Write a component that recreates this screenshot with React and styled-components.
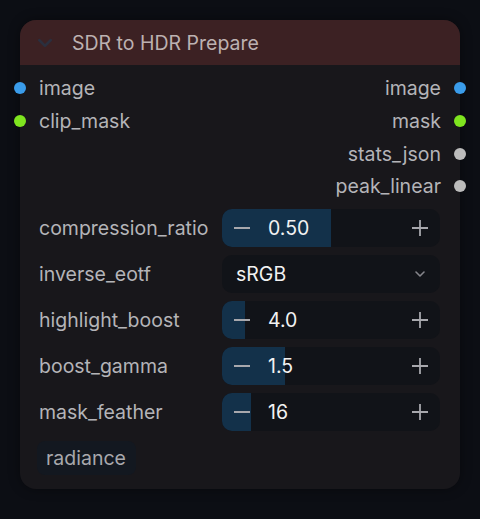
import React from "react";
import styled, { createGlobalStyle } from "styled-components";

const GlobalStyle = createGlobalStyle`
  html, body {
    margin: 0;
    padding: 0;
    background: #0c0e14;
    font-family: Inter, "Noto Sans", sans-serif;
  }
`;

const Page = styled.div`
  width: 480px;
  height: 519px;
  padding: 20px;
  box-sizing: border-box;
  background: #0c0e14;
`;

const Node = styled.div`
  width: 440px;
  height: 469px;
  box-sizing: border-box;
  background: #18171b;
  border-radius: 16px;
  display: flex;
  flex-direction: column;
  box-shadow: 0 0 12px rgba(0, 0, 0, 0.4);
`;

const Header = styled.div`
  height: 45px;
  background: #3c2123;
  border-radius: 16px 16px 0 0;
  display: flex;
  align-items: center;
  padding-left: 15px;
  gap: 17px;
  color: #bdb1b1;
  font-size: 19.5px;
`;

const Slots = styled.div`
  padding-top: 7px;
  display: flex;
  flex-direction: column;
`;

const SlotRow = styled.div`
  height: 32.7px;
  display: flex;
  align-items: center;
  justify-content: space-between;
  font-size: 19.5px;
  color: #b4b4b8;
`;

const Slot = styled.div`
  display: flex;
  align-items: center;
  gap: 13px;
  flex-direction: ${(p) => (p.$right ? "row-reverse" : "row")};
  margin: ${(p) => (p.$right ? "0 -6px 0 0" : "0 0 0 -6px")};
`;

const Dot = styled.span`
  width: 12px;
  height: 12px;
  border-radius: 50%;
  background: ${(p) => p.$color};
`;

const Widgets = styled.div`
  margin-top: 6px;
  display: flex;
  flex-direction: column;
  gap: 8px;
  padding: 0 20px 0 19px;
`;

const WidgetRow = styled.div`
  display: grid;
  grid-template-columns: 183px 218px;
  align-items: center;
  height: 38px;
`;

const Label = styled.span`
  font-size: 19.5px;
  color: #b4b4b8;
  white-space: nowrap;
`;

const Control = styled.div`
  position: relative;
  height: 38px;
  border-radius: 10px;
  background: #111318;
  overflow: hidden;
  display: flex;
  align-items: center;
  color: #f2f2f2;
  font-size: 19.5px;
  padding-left: ${(p) => (p.$select ? "14px" : "0")};
`;

const Fill = styled.div`
  position: absolute;
  left: 0;
  top: 0;
  bottom: 0;
  background: #13314a;
`;

const Btn = styled.span`
  position: relative;
  width: 40px;
  display: flex;
  justify-content: center;
  color: ${(p) => (p.$dim ? "#85858b" : "#a8a8ad")};
`;

const Value = styled.span`
  position: relative;
  flex: 1;
  padding-left: 6px;
`;

const SelectValue = styled.span`
  flex: 1;
  color: #f2f2f2;
`;

const Badge = styled.div`
  margin: 10px 0 0 17px;
  align-self: flex-start;
  height: 34px;
  padding: 0 10px 0 9px;
  display: flex;
  align-items: center;
  border-radius: 8px;
  background: #131820;
  color: #a8a8ad;
  font-size: 19.5px;
`;

const Minus = () => (
  <svg width="18" height="18" viewBox="0 0 18 18">
    <path d="M1 9h16" stroke="currentColor" strokeWidth="1.8" />
  </svg>
);

const Plus = () => (
  <svg width="18" height="18" viewBox="0 0 18 18">
    <path d="M1 9h16M9 1v16" stroke="currentColor" strokeWidth="1.8" />
  </svg>
);

const Chevron = ({ size = 14, color = "currentColor", w = 1.6 }) => (
  <svg width={size} height={size} viewBox="0 0 14 14">
    <path d="M3 5l4 4 4-4" fill="none" stroke={color} strokeWidth={w} strokeLinecap="round" strokeLinejoin="round" />
  </svg>
);

const inputs = [
  { name: "image", color: "#3a9cea" },
  { name: "clip_mask", color: "#7fe51f" },
];
const outputs = [
  { name: "image", color: "#3a9cea" },
  { name: "mask", color: "#7fe51f" },
  { name: "stats_json", color: "#bcbcbc" },
  { name: "peak_linear", color: "#bcbcbc" },
];

const widgets = [
  { name: "compression_ratio", value: "0.50", fill: 0.5 },
  { name: "inverse_eotf", value: "sRGB", select: true },
  { name: "highlight_boost", value: "4.0", fill: 0.105 },
  { name: "boost_gamma", value: "1.5", fill: 0.29 },
  { name: "mask_feather", value: "16", fill: 0.135 },
];

export default function App() {
  return (
    <Page>
      <GlobalStyle />
      <Node>
        <Header>
          <Chevron size={20} color="#2b2f3e" w={1.9} />
          <span>SDR to HDR Prepare</span>
        </Header>
        <Slots>
          {outputs.map((o, i) => (
            <SlotRow key={i}>
              {inputs[i] ? (
                <Slot>
                  <Dot $color={inputs[i].color} />
                  {inputs[i].name}
                </Slot>
              ) : (
                <span />
              )}
              <Slot $right>
                <Dot $color={o.color} />
                {o.name}
              </Slot>
            </SlotRow>
          ))}
        </Slots>
        <Widgets>
          {widgets.map((w) => (
            <WidgetRow key={w.name}>
              <Label>{w.name}</Label>
              {w.select ? (
                <Control $select>
                  <SelectValue>{w.value}</SelectValue>
                  <Btn $dim>
                    <Chevron size={14} />
                  </Btn>
                </Control>
              ) : (
                <Control>
                  <Fill style={{ width: `${w.fill * 100}%` }} />
                  <Btn>
                    <Minus />
                  </Btn>
                  <Value>{w.value}</Value>
                  <Btn>
                    <Plus />
                  </Btn>
                </Control>
              )}
            </WidgetRow>
          ))}
        </Widgets>
        <Badge>radiance</Badge>
      </Node>
    </Page>
  );
}
